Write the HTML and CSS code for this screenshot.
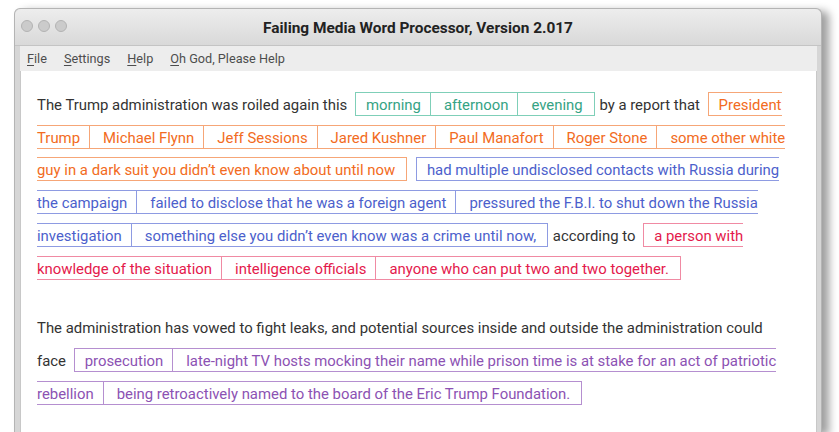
FILE: index.html
```html
<!DOCTYPE html>
<html lang="en">
<head>
<meta charset="utf-8">
<title>Failing Media Word Processor</title>
<link rel="stylesheet" href="styles.css">
</head>
<body>
<div class="window">
  <div class="titlebar">
    <div class="lights"><span class="light"></span><span class="light"></span><span class="light"></span></div>
    <div class="title">Failing Media Word Processor, Version 2.017</div>
    <div></div>
  </div>
  <div class="frame">
    <nav class="menubar">
      <span class="menu"><u>F</u>ile</span>
      <span class="menu"><u>S</u>ettings</span>
      <span class="menu"><u>H</u>elp</span>
      <span class="menu"><u>O</u>h God, Please Help</span>
    </nav>
    <div class="doc">
      <p class="para">The Trump administration was roiled again this <span class="grp green"><span class="opt">morning</span><span class="opt">afternoon</span><span class="opt">evening</span></span> by a report that <span class="grp orange"><span class="opt">President Trump</span><span class="opt">Michael Flynn</span><span class="opt">Jeff Sessions</span><span class="opt">Jared Kushner</span><span class="opt">Paul Manafort</span><span class="opt">Roger Stone</span><span class="opt">some other white guy in a dark suit you didn’t even know about until now</span></span> <span class="grp blue"><span class="opt">had multiple undisclosed contacts with Russia during the campaign</span><span class="opt">failed to disclose that he was a foreign agent</span><span class="opt">pressured the F.B.I. to shut down the Russia investigation</span><span class="opt">something else you didn’t even know was a crime until now,</span></span> according to <span class="grp red"><span class="opt">a person with knowledge of the situation</span><span class="opt">intelligence officials</span><span class="opt">anyone who can put two and two together.</span></span></p>
      <p class="para">The administration has vowed to fight leaks, and potential sources inside and outside the administration could face <span class="grp purple"><span class="opt">prosecution</span><span class="opt">late-night TV hosts mocking their name while prison time is at stake for an act of patriotic rebellion</span><span class="opt">being retroactively named to the board of the Eric Trump Foundation.</span></span></p>
    </div>
  </div>
</div>
</body>
</html>
```
FILE: styles.css
```css
html, body {
  margin: 0;
  padding: 0;
  background: #ffffff;
  overflow: hidden;
}

body {
  width: 839px;
  height: 432px;
  font-family: Roboto, "Liberation Sans", Arial, sans-serif;
}

.window {
  margin: 8px 0 0 14px;
  width: 808px;
  height: 424px;
  box-sizing: border-box;
  border: 1px solid #b4b4b4;
  border-bottom: none;
  border-radius: 6px 6px 0 0;
  background: #d8d8d8;
  box-shadow: 7px 3px 9px rgba(0, 0, 0, 0.38);
  display: flex;
  flex-direction: column;
}

.titlebar {
  height: 36px;
  flex: none;
  display: grid;
  grid-template-columns: 1fr auto 1fr;
  align-items: center;
  background: linear-gradient(#ededed, #d9d9d9);
  border-radius: 6px 6px 0 0;
  border-bottom: 1px solid #c4c4c4;
}

.lights {
  display: flex;
  gap: 5px;
  padding-left: 6px;
  padding-bottom: 3px;
}

.light {
  width: 10px;
  height: 10px;
  border-radius: 50%;
  background: #cbcbcb;
  border: 1px solid #b3b3b3;
}

.title {
  font-weight: 700;
  font-size: 15.4px;
  line-height: 36px;
  color: #222222;
  padding-top: 1px;
}

.frame {
  flex: 1;
  min-height: 0;
  display: flex;
  flex-direction: column;
  padding: 0 4px 0 5px;
  background: #d6d6d6;
}

.menubar {
  height: 25px;
  flex: none;
  display: flex;
  gap: 17px;
  padding: 0 0 0 7px;
  box-sizing: border-box;
  background: #ededed;
  font-size: 12.7px;
  line-height: 25px;
  color: #4d4d4d;
}

.menu u {
  text-decoration-thickness: 1px;
  text-underline-offset: 2px;
}

.doc {
  flex: 1;
  min-height: 0;
  overflow: hidden;
  background: #ffffff;
  padding: 18px 24px 0 16px;
  border-left: 1px solid #c8c8c8;
  border-right: 1px solid #c8c8c8;
  font-size: 14.9px;
  line-height: 32.7px;
  color: #333333;
}

.para {
  margin: 0 0 27px;
}

.grp {
  margin: 0 1px 0 4px;
}

.opt {
  padding: 3px 9px 1px 13px;
  border-style: solid;
  border-width: 1px 0 1px 1px;
}

.opt:first-child {
  padding-left: 10px;
}

.opt:last-child {
  padding-right: 11px;
  border-right-width: 1px;
}

.green { color: #35a384; }
.green .opt { border-color: #7fcfb8; }

.orange { color: #f26b22; }
.orange .opt { border-color: #f6a677; }

.blue { color: #4c5fcc; }
.blue .opt { border-color: #8e9be2; }

.red { color: #e41a4c; }
.red .opt { border-color: #f08aa3; }

.purple { color: #8c52b3; }
.purple .opt { border-color: #b58fd0; }
```
